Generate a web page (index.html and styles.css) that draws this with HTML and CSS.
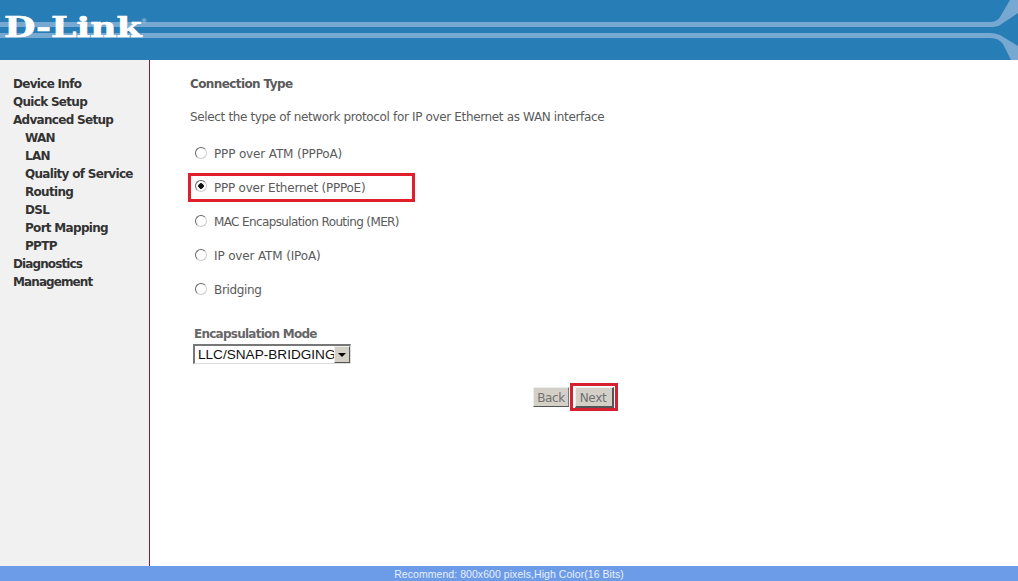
FILE: index.html
```html
<!DOCTYPE html>
<html lang="en">
<head>
    <meta charset="UTF-8">
    <title>D-Link Connection Type</title>
    <link rel="stylesheet" href="styles.css">
</head>
<body>
    <div class="header">
        <svg class="header-art" width="1018" height="60" viewBox="0 0 1018 60">
            <path d="M0 22 H990 Q997 22 1000 17 L1010 0 H1018 V13 L1000 25 Q997 27 990 27 H0 Z" fill="#77a8d2"/>
            <path d="M0 33 H990 Q995 33 1000 35 L1018 46 V60 H1011 L1003 44 Q999 38 990 38 H0 Z" fill="#77a8d2"/>
        </svg>
        <div class="logo">D-Link<sup class="logo-mark">®</sup></div>
    </div>

    <div class="main">
        <div class="sidebar">
            <a class="nav-item">Device Info</a>
            <a class="nav-item">Quick Setup</a>
            <a class="nav-item">Advanced Setup</a>
            <a class="nav-item sub">WAN</a>
            <a class="nav-item sub">LAN</a>
            <a class="nav-item sub">Quality of Service</a>
            <a class="nav-item sub">Routing</a>
            <a class="nav-item sub">DSL</a>
            <a class="nav-item sub">Port Mapping</a>
            <a class="nav-item sub">PPTP</a>
            <a class="nav-item tight">Diagnostics</a>
            <a class="nav-item tight">Management</a>
        </div>

        <div class="content">
            <h1 class="title">Connection Type</h1>
            <p class="intro">Select the type of network protocol for IP over Ethernet as WAN interface</p>

            <div class="options">
                <label class="option wide"><input type="radio" name="ntwkPrtcl"><span>PPP over ATM (PPPoA)</span></label>
                <label class="option marked"><input type="radio" name="ntwkPrtcl" checked><span>PPP over Ethernet (PPPoE)</span></label>
                <label class="option narrow"><input type="radio" name="ntwkPrtcl"><span>MAC Encapsulation Routing (MER)</span></label>
                <label class="option wide"><input type="radio" name="ntwkPrtcl"><span>IP over ATM (IPoA)</span></label>
                <label class="option"><input type="radio" name="ntwkPrtcl"><span>Bridging</span></label>
            </div>

            <div class="encap">
                <div class="encap-label">Encapsulation Mode</div>
                <div class="select-box">
                    <select class="select">
                        <option>LLC/SNAP-BRIDGING</option>
                    </select>
                    <span class="select-arrow"></span>
                </div>
            </div>

            <div class="buttons">
                <button class="btn">Back</button>
                <span class="btn-mark"><button class="btn btn-default">Next</button></span>
            </div>
        </div>
    </div>

    <div class="footer">Recommend: 800x600 pixels,High Color(16 Bits)</div>
</body>
</html>
```

FILE: styles.css
```css
html, body {
    height: 100%;
}

body {
    margin: 0;
    display: flex;
    flex-direction: column;
    background: #fff;
    font-family: "DejaVu Sans", sans-serif;
    overflow: hidden;
}

/* header */
.header {
    position: relative;
    height: 60px;
    flex: none;
    background: #277db5;
    overflow: hidden;
}

.header-art {
    position: absolute;
    top: 0;
    left: 0;
}

.logo {
    position: relative;
    display: inline-block;
    margin: 13px 0 0 4px;
    font-family: "DejaVu Serif", serif;
    font-weight: bold;
    font-size: 27px;
    line-height: 30px;
    color: #fff;
    -webkit-text-stroke: 0.6px #fff;
    transform: scaleX(1.34);
    transform-origin: left top;
}

.logo-mark {
    position: absolute;
    top: 4px;
    font-family: "Liberation Sans", sans-serif;
    font-size: 5px;
    line-height: 8px;
    font-weight: normal;
    color: #cfe0ee;
    -webkit-text-stroke: 0;
}

/* layout */
.main {
    flex: 1;
    display: flex;
    min-height: 0;
}

.sidebar {
    width: 150px;
    flex: none;
    box-sizing: border-box;
    padding: 15px 0 0 13px;
    background: #f1f1f1;
    border-right: 1px solid #8a1a45;
}

.nav-item {
    display: block;
    height: 18px;
    line-height: 18px;
    font-size: 12px;
    font-weight: bold;
    letter-spacing: -0.7px;
    color: #333;
    white-space: nowrap;
}

.nav-item.sub {
    padding-left: 12px;
}

.nav-item.tight {
    letter-spacing: -0.9px;
}

.content {
    flex: 1;
    padding: 15px 0 0 40px;
    color: #5a5a5a;
    font-size: 12px;
    letter-spacing: -0.35px;
}

.title {
    margin: 0;
    font-size: 12px;
    font-weight: bold;
    line-height: 18px;
    letter-spacing: -0.6px;
}

.intro {
    margin: 15px 0 0;
    line-height: 18px;
}

/* radio list */
.options {
    display: flex;
    flex-direction: column;
    margin: 11px 0 0 -2px;
}

.option {
    display: flex;
    align-items: center;
    box-sizing: border-box;
    height: 34px;
    width: 227px;
    padding-left: 7px;
    white-space: nowrap;
}

.option.wide {
    letter-spacing: -0.15px;
}

.option.narrow {
    letter-spacing: -0.62px;
}

.option.marked {
    height: 29px;
    margin: 2px 0 3px;
    border: 3px solid #e01f2a;
    padding-left: 4px;
    letter-spacing: -0.23px;
}

.option input {
    appearance: none;
    box-sizing: border-box;
    width: 12px;
    height: 12px;
    margin: -3px 7px 0 0;
    flex: none;
    border-radius: 50%;
    border: 1px solid #666;
    border-right-color: #ccc;
    border-bottom-color: #ccc;
    background: #fff;
}

.option input:checked {
    background: radial-gradient(circle, #111 0 2.5px, #fff 3px);
}

/* encapsulation */
.encap {
    margin: 19px 0 0 3px;
}

.encap-label {
    margin-left: 1px;
    font-weight: bold;
    line-height: 16px;
    letter-spacing: -0.75px;
    color: #666;
}

.select-box {
    display: flex;
    align-items: center;
    box-sizing: border-box;
    width: 158px;
    height: 20px;
    margin-top: 2px;
    border: solid;
    border-width: 2px 1px 1px 2px;
    border-color: #777 #ddd #ddd #777;
    background: #fff;
}

/* wider than the box, the arrow sits on top of its end */
.select {
    appearance: none;
    flex: none;
    width: 151px;
    margin-right: -12px;
    height: 16px;
    border: none;
    padding: 0 0 0 3px;
    background: #fff;
    font-family: "Liberation Sans", sans-serif;
    font-size: 13.6px;
    color: #111;
}

.select-arrow {
    position: relative;
    width: 16px;
    height: 17px;
    box-sizing: border-box;
    flex: none;
    background: #d4d0c8;
    border: 1px solid;
    border-color: #eee #555 #555 #eee;
}

.select-arrow::after {
    content: "";
    position: absolute;
    left: 3px;
    top: 6px;
    border: 4px solid transparent;
    border-top: 4px solid #000;
    border-bottom: 0;
}

/* buttons */
.buttons {
    display: flex;
    align-items: center;
    margin: 19px 0 0 343px;
}

.btn {
    box-sizing: border-box;
    height: 20px;
    width: 36px;
    padding: 1px 0 0;
    border: 1px solid;
    border-color: #eee #777 #555 #eee;
    background: #d4d0c8;
    font-family: "DejaVu Sans", sans-serif;
    font-size: 12px;
    letter-spacing: -0.35px;
    color: #707070;
}

.btn-default {
    width: 39px;
    height: 21px;
    padding: 2px 1px 0 0;
    border-width: 1px 2px 2px 1px;
    border-color: #eee #555 #555 #eee;
}

.btn-mark {
    display: flex;
    align-items: center;
    justify-content: center;
    box-sizing: border-box;
    width: 48px;
    height: 28px;
    margin-left: 1px;
    border: 3px solid #d5202f;
}

/* footer */
.footer {
    flex: none;
    height: 15px;
    line-height: 17px;
    background: #6c9be8;
    color: #e8f0fb;
    text-align: center;
    font-family: "Liberation Sans", sans-serif;
    font-size: 10.5px;
    letter-spacing: 0.06px;
    white-space: nowrap;
}
```
